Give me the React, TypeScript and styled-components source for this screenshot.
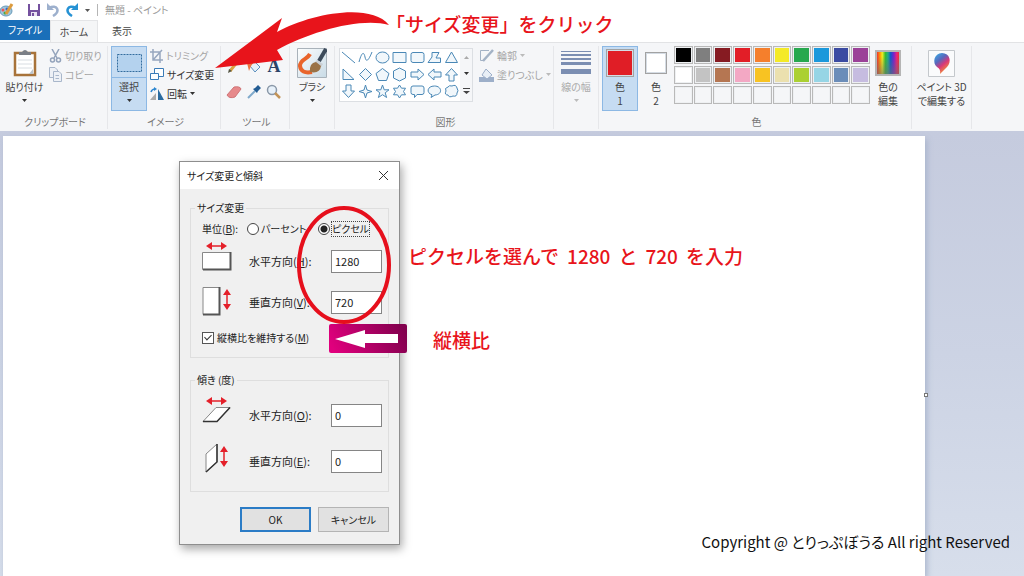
import React from "react";
import styled, { createGlobalStyle, css } from "styled-components";

const Global = createGlobalStyle`
  *, *::before, *::after { box-sizing: border-box; }
  body {
    margin: 0;
    font-family: "Noto Sans CJK JP", sans-serif;
    font-size: 10px;
    line-height: 14px;
    font-feature-settings: "palt";
    color: #333;
    background: #fff;
  }
  button, input { font: inherit; color: inherit; font-feature-settings: inherit; }
  button { padding: 0; border: 0; background: none; white-space: nowrap; }
  svg { display: block; flex: none; }
`;

const Page = styled.div`
  position: relative;
  display: flex;
  flex-direction: column;
  min-height: 100vh;
  overflow: hidden;
`;

const TitleBar = styled.header`
  display: flex;
  align-items: center;
  height: 20px;
  gap: 7px;
  color: #999;
`;

const TitleSeparator = styled.span`
  width: 1px;
  height: 12px;
  background: #b5b5b5;
`;

const QuickButton = styled.button`
  display: flex;
`;

const QuickActions = styled.div`
  display: flex;
  align-items: center;
  gap: 7px;
  padding-left: 7px;
`;

const TabBar = styled.nav`
  display: flex;
  height: 22px;
`;

const Tab = styled.button<{ $kind?: "file" | "active" }>`
  width: 48px;
  color: #444;
  ${(p) =>
    p.$kind === "file" &&
    css`
      width: 50px;
      margin-bottom: 2px;
      background: #1a6fb9;
      color: #fff;
    `}
  ${(p) =>
    p.$kind === "active" &&
    css`
      background: #f5f6f7;
      border: 1px solid #e4e5e7;
      border-width: 1px 1px 0;
    `}
`;

const Ribbon = styled.div`
  display: flex;
  height: 89px;
  padding-top: 3px;
  background: #f5f6f8;
  border-top: 1px solid #e2e3e5;
`;

const Group = styled.section<{ $width: number }>`
  display: flex;
  flex-direction: column;
  flex: none;
  width: ${(p) => p.$width}px;
  height: 83px;
  padding-left: 3px;
  border-right: 1px solid #e6e7ea;
`;

const GroupBody = styled.div<{ $gap?: number }>`
  display: flex;
  align-items: flex-start;
  gap: ${(p) => p.$gap ?? 0}px;
  height: 69px;
`;

const GroupName = styled.div`
  text-align: center;
  color: #777;
`;

const BigButton = styled.button<{ $width: number; $selected?: boolean; $muted?: boolean }>`
  display: flex;
  flex-direction: column;
  align-items: center;
  flex: none;
  width: ${(p) => p.$width}px;
  height: 65px;
  padding-top: 2px;
  color: ${(p) => (p.$muted ? "#aaa" : "#444")};
  ${(p) =>
    p.$selected &&
    css`
      background: #c6dcf2;
      box-shadow: inset 0 0 0 1px #8cb8e4;
    `}
`;

const BigLabel = styled.span`
  margin-top: 2px;
`;

const IconBox = styled.span`
  display: flex;
  align-items: center;
  justify-content: center;
  width: 30px;
  height: 30px;
`;

const SelectIconBox = styled(IconBox)`
  width: 100%;
  border-bottom: 1px solid #8cb8e4;
`;

const Stack = styled.div<{ $left?: number }>`
  display: flex;
  flex-direction: column;
  padding-left: ${(p) => p.$left ?? 0}px;
`;

const SmallButton = styled.button<{ $muted?: boolean }>`
  display: flex;
  align-items: center;
  gap: 3px;
  height: 19px;
  color: ${(p) => (p.$muted ? "#a5a5a5" : "#333")};
`;

const ToolGrid = styled.div`
  display: grid;
  grid-template-columns: repeat(3, 16px);
  grid-auto-rows: 18px;
  align-items: center;
  gap: 8px 4px;
  padding: 11px 0 0 2px;
`;

const TextToolGlyph = styled.span`
  display: block;
  font: 700 18px/18px "Liberation Serif", serif;
  color: #2b4468;
`;

const ShapeBox = styled.div`
  display: flex;
  width: 134px;
  height: 54px;
  margin: 2px 4px 0 1px;
  border: 1px solid #dcdfe3;
`;

const ShapeGrid = styled.div`
  display: grid;
  grid-template-columns: repeat(7, 1fr);
  grid-template-rows: repeat(3, 17px);
  flex: 1;
  background: #fff;
`;

const ShapeButton = styled.button`
  display: flex;
  align-items: center;
  justify-content: center;
`;

const ShapeScroll = styled.div`
  display: flex;
  flex-direction: column;
  align-items: center;
  justify-content: space-around;
  width: 12px;
`;

const Palette = styled.div`
  display: grid;
  grid-template-columns: repeat(10, 1fr);
  grid-auto-rows: 18px;
  gap: 2px 1px;
  width: 196px;
`;

const Swatch = styled.button<{ $color: string }>`
  border: 1px solid #b9b9b9;
  background: ${(p) => p.$color};
  box-shadow: inset 0 0 0 1px #eef0f2;
`;

const ColorChip = styled.span<{ $size: number; $color: string }>`
  width: ${(p) => p.$size}px;
  height: ${(p) => p.$size}px;
  border: 1px solid #a2a2a2;
  background: ${(p) => p.$color};
  box-shadow: inset 0 0 0 1px #d5dce4;
`;

const Rainbow = styled.span`
  width: 26px;
  height: 26px;
  border: 2px solid #b5b5b5;
  background:
    linear-gradient(transparent 20%, rgba(110, 110, 110, 0.6)),
    linear-gradient(90deg, #e33, #f90 14%, #ee2 24%, #3b3 38%, #2a8 50%, #15c 62%, #72c 76%, #e27 90%, #e33);
`;

const Workspace = styled.main`
  position: relative;
  display: flex;
  flex: 1;
  padding: 5px 99px 0 3px;
  background: linear-gradient(#c5cbde, #ccd3e4 50%, #d7deeb);
`;

const Canvas = styled.div`
  flex: 1;
  background: #fff;
  box-shadow: 2px 3px 6px #a9b5cc;
`;

const CanvasHandle = styled.span`
  position: absolute;
  top: 262px;
  right: 96px;
  width: 4px;
  height: 4px;
  border: 1px solid #777;
  background: #fff;
`;

const Dialog = styled.section`
  position: absolute;
  top: 161px;
  left: 179px;
  width: 221px;
  border: 1px solid #8e8e8e;
  background: #f0f0f0;
  box-shadow: 2px 4px 9px rgba(0, 0, 0, 0.35);
  color: #222;
`;

const DialogTitle = styled.header`
  display: flex;
  align-items: center;
  justify-content: space-between;
  height: 27px;
  padding: 0 10px 0 7px;
  background: #fff;
`;

const DialogBody = styled.form`
  display: flex;
  flex-direction: column;
  gap: 15px;
  padding: 12px 10px;
`;

const Fieldset = styled.fieldset<{ $height: number }>`
  height: ${(p) => p.$height}px;
  min-width: 0;
  margin: 0;
  padding: 0 0 0 11px;
  border: 1px solid #dedede;
`;

const Legend = styled.legend`
  margin-left: -7px;
  padding: 0 2px;
`;

const UnitRow = styled.div`
  display: flex;
  align-items: center;
  height: 16px;
  margin-top: 6px;
`;

const UnitName = styled.span`
  flex: none;
  width: 45px;
`;

const RadioLabel = styled.label<{ $focus?: boolean }>`
  display: flex;
  align-items: center;
  flex: none;
  gap: 1px;
  width: 71px;
  white-space: nowrap;

  span {
    border: 1px dotted ${(p) => (p.$focus ? "#444" : "transparent")};
  }
`;

const Radio = styled.input`
  appearance: none;
  flex: none;
  width: 12px;
  height: 12px;
  margin: 0;
  border: 1px solid #444;
  border-radius: 50%;
  background: #fff;

  &:checked {
    background: radial-gradient(#222 0 3px, #fff 4px);
  }
`;

const FieldRow = styled.div<{ $height: number }>`
  display: grid;
  grid-template-columns: 47px 82px 51px;
  align-items: center;
  height: ${(p) => p.$height}px;
  font-size: 11px;
`;

const NumberBox = styled.input`
  width: 100%;
  height: 23px;
  padding: 0 3px;
  border: 1px solid #858585;
  background: #fff;
`;

const CheckRow = styled.label`
  display: flex;
  align-items: center;
  gap: 3px;
  height: 28px;
  padding-top: 10px;
`;

const CheckBox = styled.input`
  appearance: none;
  width: 12px;
  height: 12px;
  margin: 0;
  border: 1px solid #555;
  background: #fff;

  &:checked::before {
    content: "";
    display: block;
    width: 4px;
    height: 7px;
    margin: 0 auto;
    border: solid #333;
    border-width: 0 1px 1px 0;
    transform: rotate(45deg);
  }
`;

const DialogActions = styled.div`
  display: flex;
  justify-content: flex-end;
  gap: 7px;
`;

const DialogButton = styled.button<{ $primary?: boolean }>`
  width: 71px;
  height: 25px;
  background: #e1e1e1;
  border: ${(p) => (p.$primary ? "2px solid #2b7cc6" : "1px solid #b4b4b4")};
`;

const Note = styled.p<{ $top: number; $left: number }>`
  position: absolute;
  top: ${(p) => p.$top}px;
  left: ${(p) => p.$left}px;
  display: flex;
  gap: 8px;
  margin: 0;
  font-size: 19px;
  line-height: 24px;
  font-weight: 500;
  font-feature-settings: normal;
  color: #e8141b;
  white-space: nowrap;
`;

const Marks = styled.svg`
  position: absolute;
  top: 0;
  left: 0;
  pointer-events: none;
`;

const Copyright = styled.footer`
  position: absolute;
  right: 14px;
  bottom: 24px;
  font-size: 15px;
  line-height: 20px;
  color: #111;
`;

const Caret = ({ color = "#333" }: { color?: string }) => (
  <svg width="5" height="3"><path d="M0 0H5L2.5 3Z" fill={color} /></svg>
);

const CaretSlot = styled.span`
  margin-top: 5px;
`;

const shapePaths = [
  "M1 2L14 13",
  "M1 12C4 1 6 2 7 7S10 12 14 2",
  "M1 7.5A6.5 5.5 0 1 0 14 7.5A6.5 5.5 0 1 0 1 7.5Z",
  "M1 2.5H14V12.5H1Z",
  "M3 2.5H12Q14 2.5 14 4.5V10.5Q14 12.5 12 12.5H3Q1 12.5 1 10.5V4.5Q1 2.5 3 2.5Z",
  "M5 2.5H12L9 8H13.5V12.5H1L5 7Z",
  "M7.5 2L13.5 12.5H1.5Z",
  "M2 2V12.5H13Z",
  "M7.5 1.5L13.5 7.5L7.5 13.5L1.5 7.5Z",
  "M7.5 1.5L14 6.5L11.5 13.5H3.5L1 6.5Z",
  "M7.5 1L13.5 4V11L7.5 14L1.5 11V4Z",
  "M1 5H8V2L14 7.5L8 13V10H1Z",
  "M14 5H7V2L1 7.5L7 13V10H14Z",
  "M5 14V8H1.5L7.5 1.5L13.5 8H10V14Z",
  "M5 1V7H1.5L7.5 13.5L13.5 7H10V1Z",
  "M7.5 1L9 6L14 7.5L9 9L7.5 14L6 9L1 7.5L6 6Z",
  "M7.5 1L9.2 5.8H14L10.2 8.8L11.6 13.5L7.5 10.7L3.4 13.5L4.8 8.8L1 5.8H5.8Z",
  "M7.5 1L9.5 4.2H13.5L11.5 7.5L13.5 10.8H9.5L7.5 14L5.5 10.8H1.5L3.5 7.5L1.5 4.2H5.5Z",
  "M3 2H12Q14 2 14 4V8.5Q14 10.5 12 10.5H7L4.5 13.5V10.5H3Q1 10.5 1 8.5V4Q1 2 3 2Z",
  "M4 13.5L5 10.8C-1 9 0 2 7.5 2S16 10.5 8 11Z",
  "M4 3Q5 1 8 2Q12 0 13 4Q15 7 13 9Q13 13 9 12Q5 14 4 11Q0 11 2 7Q0 4 4 3Z",
];

const palette = [
  "#000000", "#7f7f7f", "#861b22", "#e21e27", "#f57f2c", "#f4ea27", "#27a84e", "#1a98db", "#3b4ba2", "#9b4198",
  "#ffffff", "#c3c3c3", "#b57652", "#f3a8c4", "#f8c322", "#ebe0ae", "#abd032", "#96d5e5", "#6b8db9", "#c6bce0",
  ...Array(10).fill("#f5f6f8"),
];

const HArrow = () => (
  <><path d="M3 4H20" stroke="#e4202a" strokeWidth="1.5" /><path d="M1 4L7 0V8ZM22 4L16 0V8Z" fill="#e4202a" /></>
);
const VArrow = () => (
  <><path d="M25 8V23" stroke="#e4202a" strokeWidth="1.5" /><path d="M25 5L21 11H29ZM25 26L21 20H29Z" fill="#e4202a" /></>
);

const StretchIcons = {
  width: (
    <svg width="32" height="38"><g transform="translate(3 0)"><HArrow /></g>
      <path d="M.5 10.5H28.5V27.5H.5Z" fill="#fff" stroke="#888" /><path d="M1 27.5H28.5V10" fill="none" stroke="#555" strokeWidth="2" /></svg>
  ),
  height: (
    <svg width="32" height="32"><path d="M1 1.5H17.5V28.5H1Z" fill="#fff" stroke="#888" />
      <path d="M1 28.5H17.5V1" fill="none" stroke="#555" strokeWidth="2" /><g transform="translate(0 -2)"><VArrow /></g></svg>
  ),
  skewX: (
    <svg width="32" height="36"><g transform="translate(3 0)"><HArrow /></g>
      <path d="M14 10.5H28L15 24.5H1Z" fill="#fff" stroke="#888" /><path d="M1 24.5H15L28 10.5" fill="none" stroke="#333" strokeWidth="1.5" /></svg>
  ),
  skewY: (
    <svg width="32" height="36"><path d="M4 11L15 1V19L4 29Z" fill="#fff" stroke="#888" />
      <path d="M15 1V19L4 29" fill="none" stroke="#333" strokeWidth="1.5" /><g transform="translate(-3 -2)"><VArrow /></g></svg>
  ),
};

type FieldProps = { id: string; name: string; hotkey: string; value: string; icon: keyof typeof StretchIcons; height: number };

const Field = ({ id, name, hotkey, value, icon, height }: FieldProps) => (
  <FieldRow $height={height}>
    {StretchIcons[icon]}
    <label htmlFor={id}>{name}(<u>{hotkey}</u>):</label>
    <NumberBox id={id} defaultValue={value} />
  </FieldRow>
);

const ResizeDialog = () => (
  <Dialog role="dialog" aria-labelledby="resize-title">
    <DialogTitle>
      <span id="resize-title">サイズ変更と傾斜</span>
      <button aria-label="閉じる">
        <svg width="11" height="11"><path d="M1 1L10 10M10 1L1 10" stroke="#333" /></svg>
      </button>
    </DialogTitle>
    <DialogBody onSubmit={(e) => e.preventDefault()}>
      <Fieldset $height={157}>
        <Legend>サイズ変更</Legend>
        <UnitRow>
          <UnitName>単位(<u>B</u>):</UnitName>
          <RadioLabel><Radio type="radio" name="unit" /><span>パーセント</span></RadioLabel>
          <RadioLabel $focus><Radio type="radio" name="unit" defaultChecked /><span>ピクセル</span></RadioLabel>
        </UnitRow>
        <Field id="h-size" name="水平方向" hotkey="H" value="1280" icon="width" height={48} />
        <Field id="v-size" name="垂直方向" hotkey="V" value="720" icon="height" height={34} />
        <CheckRow><CheckBox type="checkbox" defaultChecked /><span>縦横比を維持する(<u>M</u>)</span></CheckRow>
      </Fieldset>
      <Fieldset $height={119}>
        <Legend>傾き (度)</Legend>
        <Field id="h-skew" name="水平方向" hotkey="O" value="0" icon="skewX" height={56} />
        <Field id="v-skew" name="垂直方向" hotkey="E" value="0" icon="skewY" height={36} />
      </Fieldset>
      <DialogActions>
        <DialogButton $primary>OK</DialogButton>
        <DialogButton type="button">キャンセル</DialogButton>
      </DialogActions>
    </DialogBody>
  </Dialog>
);

const PaintLogo = () => (
  <svg width="14" height="16">
    <ellipse cx="6" cy="9" rx="6" ry="5" fill="#9fc6dd" stroke="#6a9ab8" />
    <circle cx="3" cy="8" r="1.5" fill="#e55" /><circle cx="5" cy="11" r="1.5" fill="#4a4" /><circle cx="7" cy="7" r="1.5" fill="#36c" />
    <path d="M6 12L12 2" stroke="#dc9b3e" strokeWidth="3" />
  </svg>
);
const SaveIcon = () => (
  <svg width="12" height="12"><path d="M0 0H12V12H0Z" fill="#75519f" /><path d="M2 0H10V6H2Z" fill="#fff" /><path d="M3 8H9V12H3Z" fill="#eae3f2" /><path d="M4 9H6V12H4Z" fill="#75519f" /></svg>
);
const TurnIcon = ({ color, flip }: { color: string; flip?: boolean }) => (
  <svg width="12" height="14"><g transform={flip ? "matrix(-1 0 0 1 12 0)" : undefined}>
    <path d="M2 5C10 1 14 8 6 13" fill="none" stroke={color} strokeWidth="2.5" /><path d="M0 0V7H7Z" fill={color} />
  </g></svg>
);
const PasteIcon = () => (
  <svg width="24" height="28"><path d="M2 4H22V26H2Z" fill="#fff" stroke="#a8733a" strokeWidth="2.5" />
    <path d="M5 11H19M5 15H19M5 19H19" stroke="#d8dde2" /><path d="M16 25H20V20Z" fill="#bcc4cc" /><path d="M6 6V3H9Q12-1 15 3H18V6Z" fill="#7b7f86" /></svg>
);
const CutIcon = () => (
  <svg width="13" height="14" fill="none" stroke="#93a3bb" strokeWidth="1.5"><path d="M3 0L8 9M10 0L5 9" /><circle cx="3.5" cy="11" r="2" /><circle cx="9.5" cy="11" r="2" /></svg>
);
const CopyIcon = () => (
  <svg width="13" height="15" fill="#eef1f6" stroke="#a9b7cb"><path d="M.5 .5H6L8.5 3V10.5H.5Z" /><path d="M4.5 4.5H10L12.5 7V14.5H4.5ZM6.5 8.5H10M6.5 11.5H10" /></svg>
);
const CropIcon = () => (
  <svg width="13" height="14" fill="none" stroke="#97a7bf" strokeWidth="1.5"><path d="M3 0V11H13M0 3H10V14M3 11L12 1" /></svg>
);
const ResizeIcon = () => (
  <svg width="14" height="13" fill="#fff" stroke="#3b7cb8"><path d="M4.5 .5H13.5V8.5H4.5Z" /><path d="M.5 5.5H8.5V11.5H.5Z" /></svg>
);
const RotateIcon = () => (
  <svg width="14" height="14"><path d="M0 13H6V6Z" fill="#aaa" /><path d="M8 13V2L14 13Z" fill="#2a6ba0" /><path d="M1 5Q2 2 5 2" fill="none" stroke="#2c86d0" strokeWidth="1.5" /><path d="M4 0V4L7 2Z" fill="#2c86d0" /></svg>
);

const tools: { name: string; icon: React.ReactNode }[] = [
  { name: "鉛筆", icon: <svg width="16" height="16"><path d="M4 13L12 3" stroke="#d9a441" strokeWidth="3" /><path d="M2 15L3 11L6 13Z" fill="#554" /></svg> },
  { name: "塗りつぶし", icon: <svg width="16" height="16"><path d="M8 3L14 9L9 14L4 8Z" fill="#e6f0f8" stroke="#5b8fbe" /><path d="M1 5L8 4L5 8L3 13Z" fill="#ee7340" /></svg> },
  { name: "テキスト", icon: <TextToolGlyph>A</TextToolGlyph> },
  { name: "消しゴム", icon: <svg width="16" height="16"><path d="M1 11L8 3Q14 2 15 5L9 13Q3 15 1 11Z" fill="#e6898b" stroke="#cf7477" /></svg> },
  { name: "色の選択", icon: <svg width="16" height="16"><path d="M2 14L9 7" stroke="#7fa9cb" strokeWidth="2" /><path d="M7 5L9 4L12 1L15 4L12 7L11 9Z" fill="#225c93" /></svg> },
  { name: "拡大鏡", icon: <svg width="16" height="16"><circle cx="6" cy="6" r="4.5" fill="#e7f1fa" stroke="#8a98a8" strokeWidth="1.5" /><path d="M9 9L14 14" stroke="#c39458" strokeWidth="2.5" /></svg> },
];

const BrushIcon = () => (
  <svg width="30" height="30">
    <defs><linearGradient id="brush-bg" x1="0" y1="0" x2="1" y2="1"><stop offset="0" stopColor="#fdfefe" /><stop offset="1" stopColor="#c9dbe6" /></linearGradient></defs>
    <path d="M.5 .5H29.5V29.5H.5Z" fill="url(#brush-bg)" stroke="#a9b2ba" />
    <path d="M13 6C10 12 3 11 3 18Q4 26 15 24" fill="none" stroke="#e9652c" strokeWidth="4" />
    <path d="M29 1L22 13" stroke="#3d4b5b" strokeWidth="4" />
    <path d="M20 12L26 16L24 19L17 15Z" fill="#c9ced3" />
    <path d="M13 24Q12 15 19 14L24 18Q23 26 13 24Z" fill="#9a7246" />
  </svg>
);
const SelectIcon = () => (
  <svg width="27" height="22"><path d="M1.5 2.5H25.5V19.5H1.5Z" fill="#b4d2ee" stroke="#336c9e" strokeDasharray="2 1" /></svg>
);
const OutlineIcon = () => (
  <svg width="15" height="13" fill="none" stroke="#a3b2c5"><path d="M10 1.5H1.5V11.5H4" /><path d="M4 12L14 1" strokeWidth="2.5" /></svg>
);
const FillIcon = () => (
  <svg width="15" height="14"><path d="M0 9H15V14H0Z" fill="#9dafc9" /><path d="M7 1L13 7L8 11L3 7Z" fill="#e9eff6" stroke="#9dafc9" /></svg>
);
const LinesIcon = () => (
  <svg width="30" height="26" fill="#7b8eb2"><path d="M0 1H30V2H0ZM0 4H30V6H0ZM0 8H30V10H0ZM0 12H30V15H0ZM0 19H30V24H0Z" /></svg>
);
const Paint3DIcon = () => (
  <svg width="27" height="27"><defs><linearGradient id="drop" x1="0" y1="0" x2=".6" y2="1">
    <stop offset="0" stopColor="#35b6ea" /><stop offset=".4" stopColor="#5868bd" /><stop offset=".65" stopColor="#d93778" /><stop offset="1" stopColor="#f79a2d" /></linearGradient></defs>
    <path d="M.5 .5H26.5V26.5H.5Z" fill="#fafbfc" stroke="#c4c8cc" />
    <path d="M12 24Q13 19 9 17C4 13 6 3 14 3S24 12 19 17Q16 20 12 24Z" fill="url(#drop)" /></svg>
);

export default function App() {
  return (
    <Page>
      <Global />
      <TitleBar>
        <PaintLogo />
        <QuickActions>
          <QuickButton aria-label="上書き保存"><SaveIcon /></QuickButton>
          <QuickButton aria-label="元に戻す"><TurnIcon color="#9db0cd" /></QuickButton>
          <QuickButton aria-label="やり直し"><TurnIcon color="#2692d4" flip /></QuickButton>
          <QuickButton aria-label="カスタマイズ"><Caret color="#555" /></QuickButton>
        </QuickActions>
        <TitleSeparator />
        <span>無題 - ペイント</span>
      </TitleBar>
      <TabBar>
        <Tab $kind="file">ファイル</Tab>
        <Tab $kind="active">ホーム</Tab>
        <Tab>表示</Tab>
      </TabBar>
      <Ribbon>
        <Group $width={108}>
          <GroupBody $gap={3}>
            <BigButton $width={43}>
              <IconBox><PasteIcon /></IconBox><BigLabel>貼り付け</BigLabel><CaretSlot><Caret /></CaretSlot>
            </BigButton>
            <Stack>
              <SmallButton $muted><CutIcon />切り取り</SmallButton>
              <SmallButton $muted><CopyIcon />コピー</SmallButton>
            </Stack>
          </GroupBody>
          <GroupName>クリップボード</GroupName>
        </Group>
        <Group $width={113}>
          <GroupBody $gap={3}>
            <BigButton $width={36} $selected>
              <SelectIconBox><SelectIcon /></SelectIconBox><BigLabel>選択</BigLabel><CaretSlot><Caret /></CaretSlot>
            </BigButton>
            <Stack>
              <SmallButton $muted><CropIcon />トリミング</SmallButton>
              <SmallButton><ResizeIcon />サイズ変更</SmallButton>
              <SmallButton><RotateIcon />回転<Caret /></SmallButton>
            </Stack>
          </GroupBody>
          <GroupName>イメージ</GroupName>
        </Group>
        <Group $width={69}>
          <GroupBody>
            <ToolGrid>
              {tools.map((t) => (
                <button key={t.name} aria-label={t.name}>{t.icon}</button>
              ))}
            </ToolGrid>
          </GroupBody>
          <GroupName>ツール</GroupName>
        </Group>
        <Group $width={45}>
          <BigButton $width={38}>
            <IconBox><BrushIcon /></IconBox><BigLabel>ブラシ</BigLabel><CaretSlot><Caret /></CaretSlot>
          </BigButton>
        </Group>
        <Group $width={219}>
          <GroupBody>
            <ShapeBox>
              <ShapeGrid>
                {shapePaths.map((d, i) => (
                  <ShapeButton key={d} aria-label={`図形 ${i + 1}`}>
                    <svg width="15" height="15"><path d={d} fill={i < 2 ? "none" : "#f1f7fb"} stroke="#4a88b6" /></svg>
                  </ShapeButton>
                ))}
              </ShapeGrid>
              <ShapeScroll>
                <svg width="5" height="3"><path d="M0 3H5L2.5 0Z" fill="#aaa" /></svg>
                <Caret />
                <svg width="7" height="7"><path d="M0 0H7V1H0ZM0 3H7L3.5 6Z" fill="#444" /></svg>
              </ShapeScroll>
            </ShapeBox>
            <Stack $left={2}>
              <SmallButton $muted><OutlineIcon />輪郭<Caret color="#bbb" /></SmallButton>
              <SmallButton $muted><FillIcon />塗りつぶし<Caret color="#bbb" /></SmallButton>
            </Stack>
          </GroupBody>
          <GroupName>図形</GroupName>
        </Group>
        <Group $width={45}>
          <BigButton $width={38} $muted>
            <IconBox><LinesIcon /></IconBox><BigLabel>線の幅</BigLabel><CaretSlot><Caret color="#bbb" /></CaretSlot>
          </BigButton>
        </Group>
        <Group $width={313}>
          <GroupBody>
            <BigButton $width={36} $selected>
              <IconBox><ColorChip $size={28} $color="#e01e26" /></IconBox><BigLabel>色<br />1</BigLabel>
            </BigButton>
            <BigButton $width={36}>
              <IconBox><ColorChip $size={22} $color="#fff" /></IconBox><BigLabel>色<br />2</BigLabel>
            </BigButton>
            <Palette>
              {palette.map((c, i) => <Swatch key={i} $color={c} aria-label={`色 ${i + 1}`} />)}
            </Palette>
            <BigButton $width={36}>
              <IconBox><Rainbow /></IconBox><BigLabel>色の<br />編集</BigLabel>
            </BigButton>
          </GroupBody>
          <GroupName>色</GroupName>
        </Group>
        <Group $width={60}>
          <BigButton $width={53}>
            <IconBox><Paint3DIcon /></IconBox><BigLabel>ペイント 3D<br />で編集する</BigLabel>
          </BigButton>
        </Group>
      </Ribbon>
      <Workspace>
        <Canvas />
        <CanvasHandle />
      </Workspace>
      <ResizeDialog />
      <Marks width="420" height="360">
        <path d="M215 68L282 18L277 32C310 14 370 2 389 25C360 17 310 32 277 50L283 60Z" fill="#e8141b" />
        <ellipse cx="344" cy="265" rx="45" ry="57" fill="none" stroke="#e60f1c" strokeWidth="4" />
        <defs><linearGradient id="badge" x1="0" y1=".6" x2="1" y2=".4"><stop offset="0" stopColor="#e0007d" /><stop offset="1" stopColor="#82004e" /></linearGradient></defs>
        <rect x="329" y="324" width="78" height="29" rx="2" fill="url(#badge)" />
        <path d="M335 339L365 330V334H398V343H365V348Z" fill="#fff" />
      </Marks>
      <Note $top={12} $left={386}>「サイズ変更」をクリック</Note>
      <Note $top={244} $left={408}>
        <span>ピクセルを選んで</span>
        <span>1280</span>
        <span>と</span>
        <span>720</span>
        <span>を入力</span>
      </Note>
      <Note $top={328} $left={433}>縦横比</Note>
      <Copyright>Copyright @ とりっぷぼうる All right Reserved</Copyright>
    </Page>
  );
}
